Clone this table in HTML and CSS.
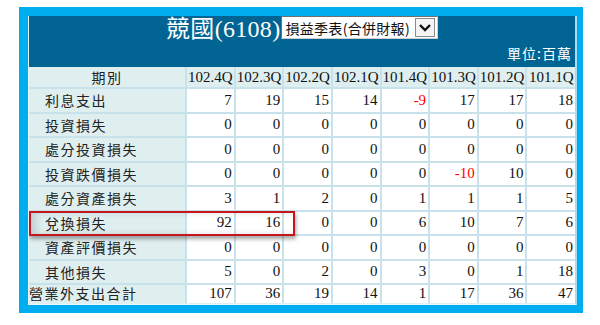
FILE: index.html
```html
<!DOCTYPE html>
<html lang="zh-Hant">
<head>
<meta charset="utf-8">
<title>競國(6108) 營業外支出</title>
<link rel="stylesheet" href="styles.css">
</head>
<body>
<div class="frame">
  <div class="panel">
    <div class="head">
      <div class="title-row">
        <span class="title">競國(6108)</span>
        <div class="select">
          <span class="select-text">損益季表(合併財報)</span>
          <span class="select-btn"><svg width="14" height="10" viewBox="0 0 14 10"><polyline points="2,2 7,7 12,2" fill="none" stroke="#111" stroke-width="2.4"/></svg></span>
        </div>
      </div>
      <div class="unit">單位:百萬</div>
    </div>
    <table class="data">
      <thead>
        <tr><th class="lbl">期別</th><th>102.4Q</th><th>102.3Q</th><th>102.2Q</th><th>102.1Q</th><th>101.4Q</th><th>101.3Q</th><th>101.2Q</th><th>101.1Q</th></tr>
      </thead>
      <tbody>
        <tr><td class="lbl">利息支出</td><td>7</td><td>19</td><td>15</td><td>14</td><td class="neg">-9</td><td>17</td><td>17</td><td>18</td></tr>
        <tr><td class="lbl">投資損失</td><td>0</td><td>0</td><td>0</td><td>0</td><td>0</td><td>0</td><td>0</td><td>0</td></tr>
        <tr><td class="lbl">處分投資損失</td><td>0</td><td>0</td><td>0</td><td>0</td><td>0</td><td>0</td><td>0</td><td>0</td></tr>
        <tr><td class="lbl">投資跌價損失</td><td>0</td><td>0</td><td>0</td><td>0</td><td>0</td><td class="neg">-10</td><td>10</td><td>0</td></tr>
        <tr><td class="lbl">處分資產損失</td><td>3</td><td>1</td><td>2</td><td>0</td><td>1</td><td>1</td><td>1</td><td>5</td></tr>
        <tr><td class="lbl">兌換損失</td><td>92</td><td>16</td><td>0</td><td>0</td><td>6</td><td>10</td><td>7</td><td>6</td></tr>
        <tr><td class="lbl">資產評價損失</td><td>0</td><td>0</td><td>0</td><td>0</td><td>0</td><td>0</td><td>0</td><td>0</td></tr>
        <tr><td class="lbl">其他損失</td><td>5</td><td>0</td><td>2</td><td>0</td><td>3</td><td>0</td><td>1</td><td>18</td></tr>
        <tr class="total"><td class="lbl">營業外支出合計</td><td>107</td><td>36</td><td>19</td><td>14</td><td>1</td><td>17</td><td>36</td><td>47</td></tr>
      </tbody>
    </table>
    <div class="highlight"></div>
  </div>
</div>
</body>
</html>
```

FILE: styles.css
```css
html, body {
  margin: 0;
  padding: 0;
  background: #ffffff;
}

.frame {
  box-sizing: border-box;
  margin: 7px 0 0 19px;
  width: 564px;
  height: 306px;
  padding: 9px 6px 8px 9px;
  background: #00adef;
}

.panel {
  position: relative;
  height: 288px;
  overflow: hidden;
  border-left: 1px solid #e9f7fd;
  border-right: 2px solid #a6ddf3;
  border-bottom: 1px solid #e9f7fd;
  background: #dfeff0;
}

.head {
  height: 51px;
  background: #026493;
  color: #ffffff;
}

.title-row {
  height: 23px;
  display: flex;
  justify-content: center;
  align-items: flex-start;
  padding-right: 0;
}

.title {
  font-family: "Liberation Serif", "Noto Sans CJK TC", serif;
  font-size: 24px;
  line-height: 25px;
  margin-top: 1px;
  letter-spacing: 0.3px;
  white-space: nowrap;
}

.select {
  display: flex;
  align-items: center;
  height: 23px;
  box-sizing: border-box;
  margin-left: 1px;
  padding: 0 2px 0 3px;
  background: #ffffff;
  border: 1px solid #6f6f6f;
  border-right-color: #cfcfcf;
  border-bottom-color: #cfcfcf;
}

.select-text {
  font-family: "Noto Sans CJK TC", "Noto Sans", sans-serif;
  font-size: 14px;
  line-height: 18px;
  letter-spacing: 0.3px;
  color: #111;
  white-space: nowrap;
}

.select-btn {
  display: flex;
  align-items: center;
  justify-content: center;
  width: 18px;
  height: 17px;
  margin-left: 5px;
  border: 1px solid #8a8a8a;
  background: #f4f4f4;
}

.unit {
  padding: 6px 3px 6px 0;
  text-align: right;
  font-family: "Noto Sans CJK TC", "Noto Sans", sans-serif;
  font-size: 14px;
  line-height: 16px;
  letter-spacing: 1px;
}

.data {
  width: 546px;
  border-collapse: collapse;
  border-style: hidden;
  table-layout: fixed;
}

.data th,
.data td {
  border: 2px solid #c7e2ea;
  padding: 0 2px 0 0;
  font-family: "Liberation Serif", serif;
  font-size: 15px;
  font-weight: normal;
  color: #111;
  white-space: nowrap;
  overflow: hidden;
}

.data th {
  height: 20px;
  padding: 0;
  text-align: center;
  background: #dfeff0;
}

.data td {
  height: 22.5px;
  text-align: right;
  background: #ffffff;
}

.data .lbl {
  width: 156px;
  padding: 0 0 0 16px;
  text-align: left;
  background: #dfeff0;
  font-family: "Noto Sans CJK TC", "Noto Sans", sans-serif;
  font-size: 14px;
  letter-spacing: 1.5px;
  color: #222;
}

.data th.lbl {
  padding: 0;
  text-align: center;
}

.data .total td {
  height: 18px;
  vertical-align: top;
  line-height: 17px;
}

.data .total .lbl {
  padding-left: 0;
}

.data .neg {
  color: #ff0000;
}

.highlight {
  position: absolute;
  left: 0;
  top: 195px;
  width: 266px;
  height: 25px;
  box-sizing: border-box;
  border: 2px solid #c4161c;
  box-shadow: 1px 3px 4px rgba(0, 0, 0, 0.35), inset 6px 0 6px rgba(0, 0, 0, 0.12);
}
```
